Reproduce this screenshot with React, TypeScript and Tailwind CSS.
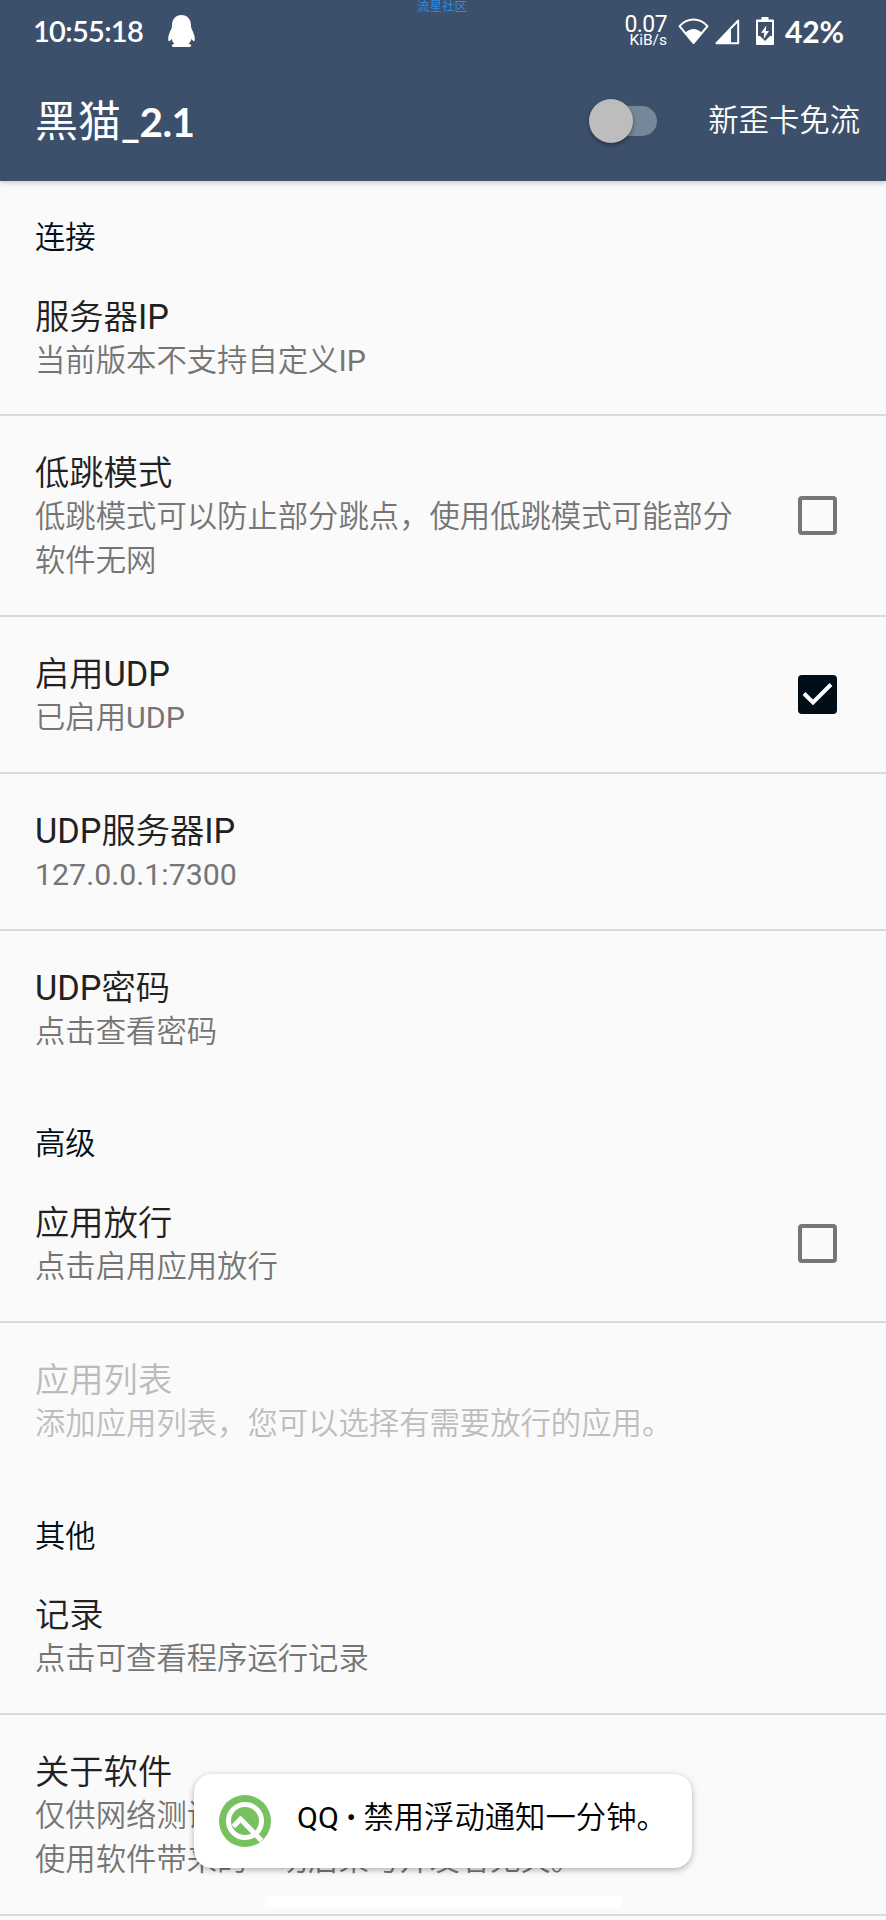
import { useState } from "react";

interface PreferenceItem {
  id: string;
  title: string;
  summary: string;
  checkable?: boolean;
  disabled?: boolean;
}

interface PreferenceGroup {
  id: string;
  label: string;
  items: PreferenceItem[];
}

const GROUPS: PreferenceGroup[] = [
  {
    id: "connection",
    label: "连接",
    items: [
      { id: "server-ip", title: "服务器IP", summary: "当前版本不支持自定义IP" },
      {
        id: "low-jump",
        title: "低跳模式",
        summary: "低跳模式可以防止部分跳点，使用低跳模式可能部分软件无网",
        checkable: true,
      },
      { id: "udp", title: "启用UDP", summary: "已启用UDP", checkable: true },
      { id: "udp-ip", title: "UDP服务器IP", summary: "127.0.0.1:7300" },
      { id: "udp-password", title: "UDP密码", summary: "点击查看密码" },
    ],
  },
  {
    id: "advanced",
    label: "高级",
    items: [
      { id: "app-bypass", title: "应用放行", summary: "点击启用应用放行", checkable: true },
      {
        id: "app-list",
        title: "应用列表",
        summary: "添加应用列表，您可以选择有需要放行的应用。",
        disabled: true,
      },
    ],
  },
  {
    id: "other",
    label: "其他",
    items: [
      { id: "log", title: "记录", summary: "点击可查看程序运行记录" },
      {
        id: "about",
        title: "关于软件",
        summary: "仅供网络测试使用，请勿用于非法用途。\n使用软件带来的一切后果与开发者无关。",
      },
    ],
  },
];

function PenguinIcon() {
  return (
    <svg viewBox="0 0 27 32" className="h-8 w-[27px]" fill="#fff">
      <path d="M13.500 0C7.500 0 4 4.300 4 10.500c0 1.500-.2 2.600-.8 3.800C1.700 17.300.2 20.500.2 23.800c0 1.600.3 2.400.8 2.400.8 0 1.700-1.200 2.500-2.500.5 1.900 1.500 3.700 2.900 5-1.400.3-2.600.9-2.600 1.800 0 1 1.200 1.500 3 1.500h13.400c1.800 0 3-.5 3-1.500 0-.9-1.200-1.500-2.600-1.800 1.400-1.300 2.400-3.100 2.900-5 .8 1.300 1.700 2.500 2.500 2.500.5 0 .8-.8.8-2.400 0-3.300-1.500-6.500-3-9.500-.6-1.200-.8-2.300-.8-3.800C23 4.300 19.500 0 13.500 0Z" />
    </svg>
  );
}

function WifiIcon() {
  return (
    <svg viewBox="0 0 31 27" className="h-[27px] w-[31px]" fill="none">
      <path d="M1.500 8.200C9.500-.6 21.500-.6 29.500 8.200L15.500 25Z" stroke="#fff" strokeWidth="2" strokeLinejoin="round" />
      <path d="M7.500 14.500c4.500-4.700 11.500-4.700 16 0l-8 10.500Z" fill="#fff" />
    </svg>
  );
}

function SignalIcon() {
  return (
    <svg viewBox="0 0 26 27" className="h-[27px] w-[26px]">
      <path d="M24.200 2.500v22.700H2.500Z" fill="none" stroke="#fff" strokeWidth="2" strokeLinejoin="round" />
      <path d="M17 10v15H2.500Z" fill="#fff" />
    </svg>
  );
}

function BatteryIcon() {
  return (
    <svg viewBox="0 0 18 28" className="h-7 w-[18px]">
      <path
        d="M5.500 0h7v2.500H17a1 1 0 0 1 1 1V27a1 1 0 0 1-1 1H1a1 1 0 0 1-1-1V3.500a1 1 0 0 1 1-1h4.500Z"
        fill="#fff"
      />
      <path d="M2 5h14v14h-2l-5 5-5-5H2Z" fill="#3d506b" />
      <path d="M10.300 8.500 5 15.800h3.200L7.700 22 13 14H9.800Z" fill="#fff" />
    </svg>
  );
}

function ToastLogo() {
  return (
    <svg viewBox="0 0 52 52" className="size-[52px]" fill="none">
      <circle cx="26" cy="26" r="26" fill="#77c25e" />
      <circle cx="26" cy="26" r="16.500" stroke="#fff" strokeWidth="5" />
      <path d="M14.500 31.500 21.500 24 42.500 45.500" stroke="#fff" strokeWidth="5" />
    </svg>
  );
}

interface MixedTextProps {
  text: string;
}

// Latin runs need a heavier weight than the Chinese text around them
function MixedText({ text }: MixedTextProps) {
  return (
    <>
      {text.split(/([A-Za-z0-9.:]+)/).map((part, index) =>
        index % 2 === 1 ? (
          <span key={index} className="font-normal">
            {part}
          </span>
        ) : (
          part
        ),
      )}
    </>
  );
}

function StatusBar() {
  return (
    <div className="flex h-[62px] items-center pl-[33px] font-normal text-white">
      <span className="w-[135px] font-['Lato'] text-[29px] font-semibold tracking-[-0.700px]">10:55:18</span>
      <PenguinIcon />
      <div className="ml-auto flex items-center pr-[41px]">
        <div className="flex w-[43px] flex-col items-end">
          <span className="text-[23px] leading-[17px] tracking-[-0.600px]">0.07</span>
          <span className="text-[15.500px] leading-[14px]">KiB/s</span>
        </div>
        <span className="ml-[11px]">
          <WifiIcon />
        </span>
        <span className="ml-[5px]">
          <SignalIcon />
        </span>
        <span className="ml-4">
          <BatteryIcon />
        </span>
        <span className="ml-[11px] w-[60px] font-['Lato'] text-[30px] font-bold tracking-[-0.200px]">42%</span>
      </div>
    </div>
  );
}

interface CheckboxProps {
  checked: boolean;
}

function Checkbox({ checked }: CheckboxProps) {
  if (!checked) {
    return <span className="size-[39px] rounded-[4px] border-4 border-[#767676]" />;
  }

  return (
    <span className="size-[39px] rounded-[4px] bg-[#000e1a]">
      <svg viewBox="0 0 39 39" className="size-full" fill="none">
        <path d="M6 18.500 15 27.500 33 9.500" stroke="#fff" strokeWidth="4" />
      </svg>
    </span>
  );
}

interface PreferenceRowProps {
  item: PreferenceItem;
  checked: boolean;
  divided: boolean;
  onToggle: (id: string) => void;
}

function PreferenceRow({ item, checked, divided, onToggle }: PreferenceRowProps) {
  return (
    <div
      className={`flex items-center border-b-2 pr-[49px] pl-[35px] ${divided ? "border-[#dadada]" : "border-transparent"}`}
      onClick={() => item.checkable && onToggle(item.id)}
    >
      <div className="w-[710px] pt-[35px] pb-[31.800px]">
        <p className={`text-[34.300px] leading-[44px] ${item.disabled ? "text-[#bbbbbb]" : "text-[#212121]"}`}>
          <MixedText text={item.title} />
        </p>
        <p
          className={`text-[30.350px] leading-[44px] whitespace-pre-line ${
            item.disabled ? "text-[#bdbdbd]" : "text-[#757575]"
          }`}
        >
          <MixedText text={item.summary} />
        </p>
      </div>
      {item.checkable ? (
        <div className="ml-auto flex">
          <Checkbox checked={checked} />
        </div>
      ) : null}
    </div>
  );
}

export default function App() {
  const [enabled, setEnabled] = useState(false);
  const [checkedIds, setCheckedIds] = useState<string[]>(["udp"]);

  const handleToggle = (id: string) => {
    setCheckedIds((ids) => (ids.includes(id) ? ids.filter((value) => value !== id) : [...ids, id]));
  };

  return (
    <div className="relative h-[1920px] w-[886px] overflow-hidden bg-[#fafafa] font-['Roboto','Noto_Sans_CJK_SC',sans-serif] font-[350]">
      <header className="relative h-[181px] bg-[#3d506b] shadow-[0_2px_5px_rgba(0,0,0,0.2)]">
        <span className="absolute -top-px left-[417px] text-[12.500px] leading-[15px] font-normal text-[#2f8be0]">
          流星社区
        </span>
        <StatusBar />
        <div className="flex h-[118px] items-center pr-[26px] pl-[35px] text-white">
          <h1 className="font-['Lato','Noto_Sans_CJK_SC',sans-serif] text-[43px] font-normal">
            <span>黑猫</span>
            <span className="text-[40.500px] font-bold tracking-[-0.500px]">_2.1</span>
          </h1>
          <button
            type="button"
            role="switch"
            aria-checked={enabled}
            onClick={() => setEnabled(!enabled)}
            className={`mr-[51px] ml-auto flex h-[30px] w-[68px] items-center rounded-full bg-[#76879a] ${
              enabled ? "justify-end" : "justify-start"
            }`}
          >
            <span className="size-11 rounded-full bg-[#bdbdbd] shadow-[0_2px_4px_rgba(0,0,0,0.4)]" />
          </button>
          <span className="text-[30.350px]">新歪卡免流</span>
        </div>
      </header>

      <main>
        {GROUPS.map((group) => (
          <section key={group.id}>
            <h2 className="h-[78.500px] pt-[35px] pl-[35px] text-[30.350px] leading-[43px] text-[#000e1a]">
              {group.label}
            </h2>
            {group.items.map((item, index) => (
              <PreferenceRow
                key={item.id}
                item={item}
                checked={checkedIds.includes(item.id)}
                divided={index < group.items.length - 1 || group.id === "other"}
                onToggle={handleToggle}
              />
            ))}
          </section>
        ))}
      </main>

      <div className="absolute top-[1896px] left-[264px] h-3 w-[358px] rounded-full bg-white" />

      <div className="absolute top-[1774px] left-[194px] flex h-[94px] w-[498px] items-center rounded-[18px] bg-white pl-[25px] shadow-[0_2px_6px_rgba(0,0,0,0.3)]">
        <ToastLogo />
        <span className="mb-1.5 ml-[26px] text-[30.350px] whitespace-nowrap text-black">
          <MixedText text="QQ • 禁用浮动通知一分钟。" />
        </span>
      </div>
    </div>
  );
}
